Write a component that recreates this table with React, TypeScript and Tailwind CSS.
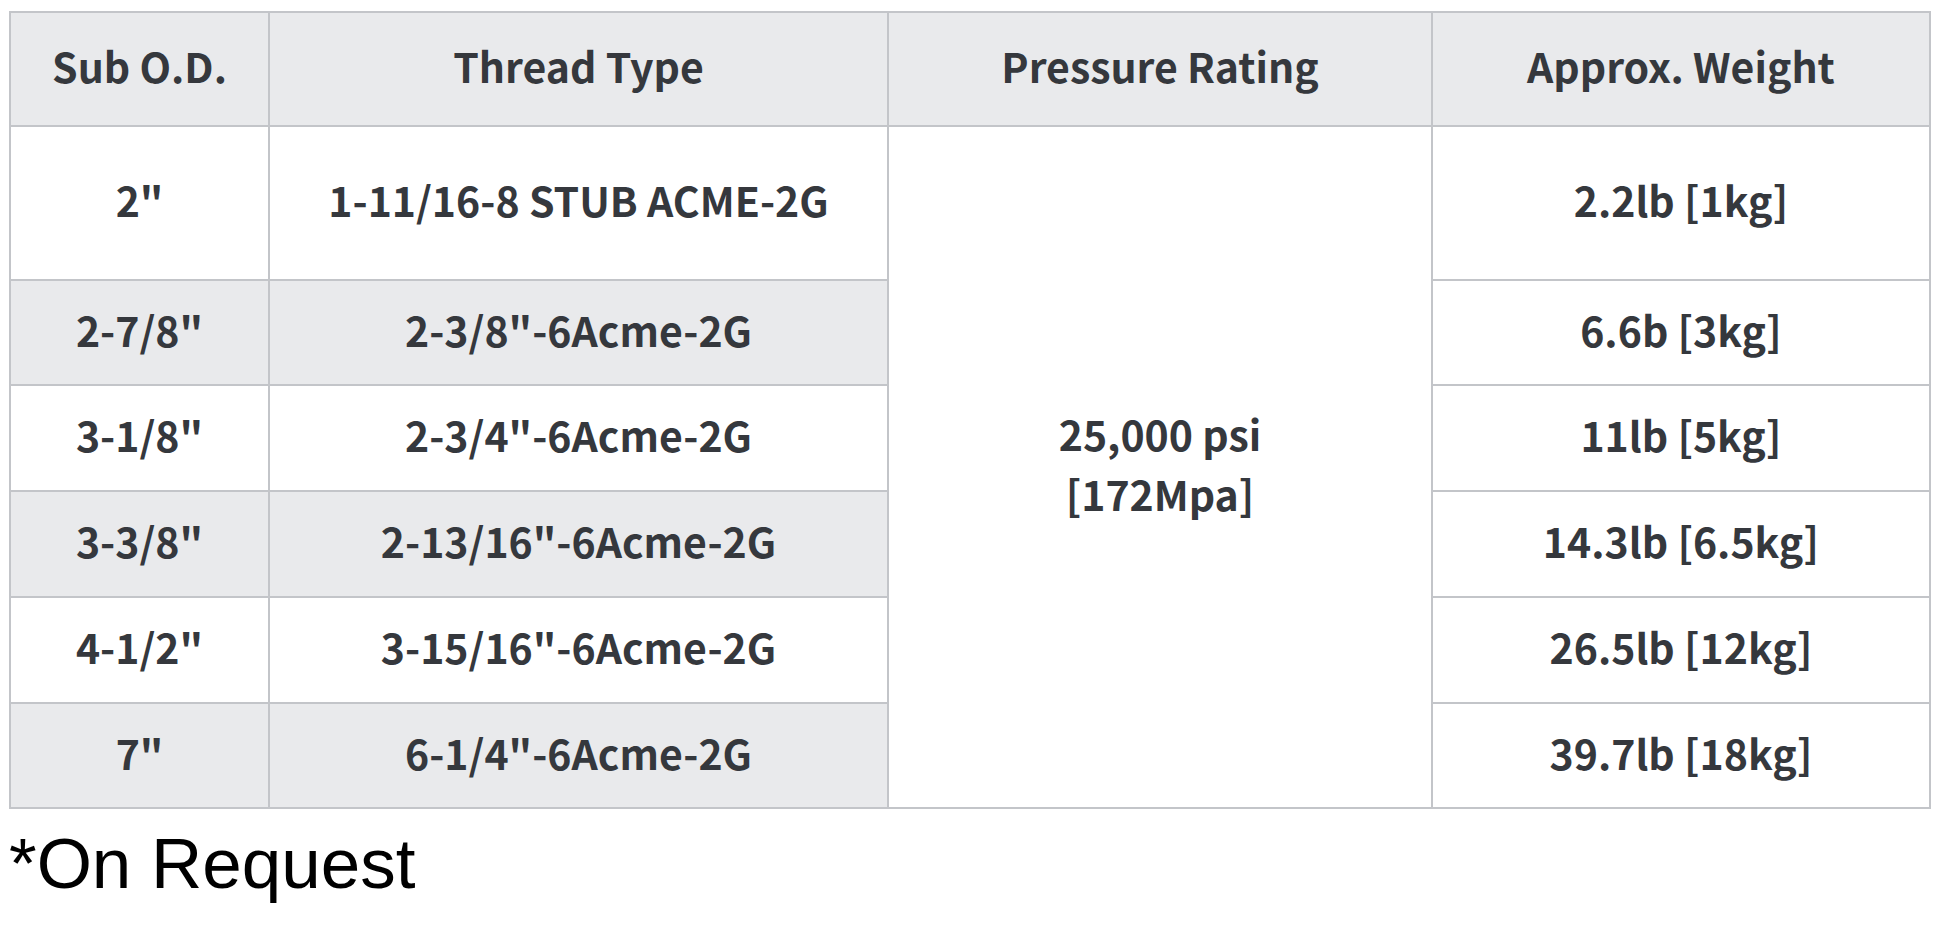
const rows = [
  { od: '2"', thread: '1-11/16-8 STUB ACME-2G', weight: '2.2lb [1kg]', h: 'h-[154px]' },
  { od: '2-7/8"', thread: '2-3/8"-6Acme-2G', weight: '6.6b [3kg]', h: 'h-[105px]' },
  { od: '3-1/8"', thread: '2-3/4"-6Acme-2G', weight: '11lb [5kg]', h: 'h-[106px]' },
  { od: '3-3/8"', thread: '2-13/16"-6Acme-2G', weight: '14.3lb [6.5kg]', h: 'h-[106px]' },
  { od: '4-1/2"', thread: '3-15/16"-6Acme-2G', weight: '26.5lb [12kg]', h: 'h-[106px]' },
  { od: '7"', thread: '6-1/4"-6Acme-2G', weight: '39.7lb [18kg]', h: 'h-[105px]' },
]

const cell = 'border-2 border-[#c3c5c9] text-center align-middle p-0 pb-[8px]'

export default function App() {
  return (
    <div className="min-h-screen bg-white pl-[9px] pr-[9px] pt-[11px]">
      <table
        className="w-[1920px] border-collapse border-2 border-[#c3c5c9] table-fixed text-[41px] font-bold text-[#35383d] leading-[60px]"
        style={{ fontFamily: '"Noto Sans CJK SC", "Source Sans Pro", sans-serif' }}
      >
        <colgroup>
          <col className="w-[259px]" />
          <col className="w-[619px]" />
          <col className="w-[544px]" />
          <col className="w-[498px]" />
        </colgroup>
        <thead>
          <tr className="h-[114px] bg-[#e9eaec]">
            <th className={cell}>Sub O.D.</th>
            <th className={cell}>Thread Type</th>
            <th className={cell}>Pressure Rating</th>
            <th className={cell}>Approx. Weight</th>
          </tr>
        </thead>
        <tbody>
          {rows.map((r, i) => (
            <tr key={r.od} className={r.h}>
              <td className={`${cell} ${i % 2 === 1 ? 'bg-[#e9eaec]' : 'bg-white'}`}>{r.od}</td>
              <td className={`${cell} ${i % 2 === 1 ? 'bg-[#e9eaec]' : 'bg-white'}`}>{r.thread}</td>
              {i === 0 && (
                <td rowSpan={6} className={`${cell} bg-white`}>
                  25,000 psi
                  <br />
                  [172Mpa]
                </td>
              )}
              <td className={`${cell} bg-white`}>{r.weight}</td>
            </tr>
          ))}
        </tbody>
      </table>
      <p
        className="mt-[14px] text-[71px] leading-[82px] text-black"
        style={{ fontFamily: '"Liberation Sans", Arial, sans-serif' }}
      >
        *On Request
      </p>
    </div>
  )
}
